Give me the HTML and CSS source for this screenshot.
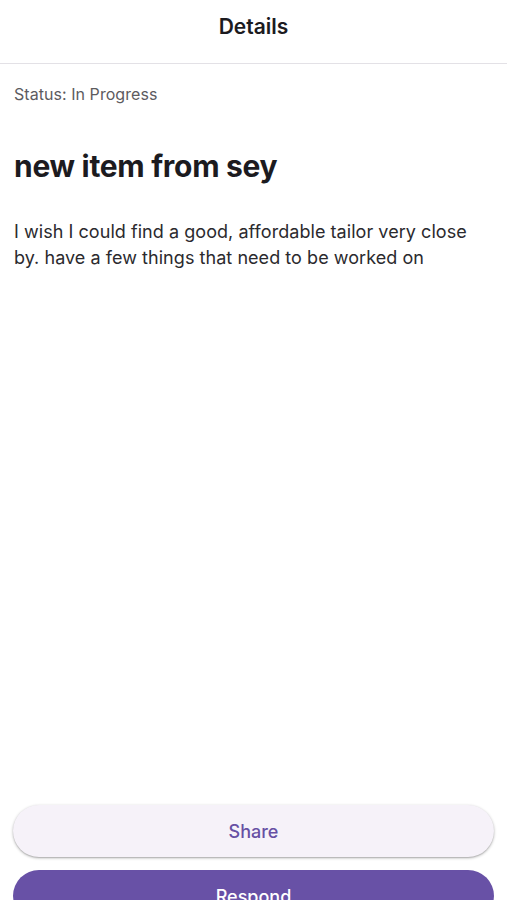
FILE: index.html
```html
<!DOCTYPE html>
<html lang="en">
<head>
<meta charset="utf-8">
<title>Details</title>
<link rel="stylesheet" href="styles.css">
</head>
<body>
<div class="app">
  <header class="topbar">
    <h1 class="topbar-title">Details</h1>
  </header>
  <main class="content">
    <p class="status">Status: In Progress</p>
    <h2 class="item-title">new item from sey</h2>
    <p class="item-body">I wish I could find a good, affordable tailor very close by. have a few things that need to be worked on</p>
  </main>
  <footer class="actions">
    <button class="btn btn-share" type="button">Share</button>
    <button class="btn btn-respond" type="button">Respond</button>
  </footer>
</div>
</body>
</html>
```

FILE: styles.css
```css
html, body {
  margin: 0;
  padding: 0;
  background: #ffffff;
  overflow: hidden;
}

body {
  font-family: Inter, "Noto Sans", "Liberation Sans", sans-serif;
  color: #1c1b1f;
}

.app {
  min-height: 935px;
  display: flex;
  flex-direction: column;
  background: #ffffff;
}

.topbar {
  height: 64px;
  box-sizing: border-box;
  padding-top: 13px;
  background: #ffffff;
  border-bottom: 1px solid #e3e1e6;
  display: flex;
  align-items: flex-start;
  justify-content: center;
}

.topbar-title {
  margin: 0;
  font-size: 21px;
  line-height: 28px;
  font-weight: 600;
  color: #1c1b1f;
}

.content {
  flex: 1;
  padding: 20px 14px 0;
}

.status {
  margin: 0;
  font-size: 16px;
  line-height: 20px;
  color: #5c5b60;
  letter-spacing: 0.05px;
}

.item-title {
  margin: 44px 0 0;
  font-size: 30px;
  line-height: 36px;
  font-weight: 700;
  color: #1c1b1f;
  letter-spacing: -0.3px;
}

.item-body {
  margin: 35px 0 0;
  font-size: 18px;
  line-height: 26px;
  color: #2b2a2e;
  letter-spacing: 0.05px;
}

.actions {
  display: flex;
  flex-direction: column;
  gap: 13px;
  padding: 0 13px 13px;
}

.btn {
  height: 52px;
  border: none;
  border-radius: 26px;
  font-family: inherit;
  font-size: 18px;
  font-weight: 500;
  cursor: pointer;
}

.btn-share {
  background: #f6f2f9;
  color: #6750a4;
  box-shadow: 0 1px 3px rgba(0, 0, 0, 0.3), 0 1px 1px rgba(0, 0, 0, 0.1);
}

.btn-respond {
  background: #6851a6;
  color: #ffffff;
}
```
